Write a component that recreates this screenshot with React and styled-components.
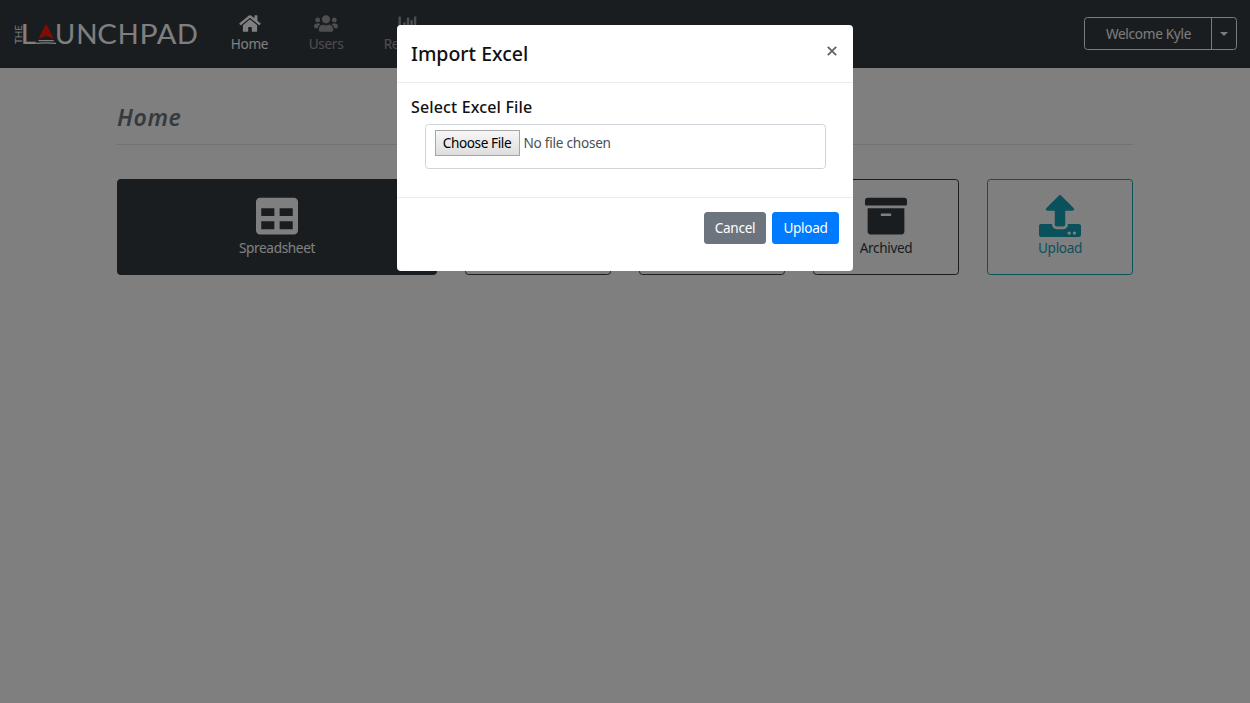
import React from "react";
import styled, { createGlobalStyle } from "styled-components";
import { FaHome, FaUsers, FaChartBar, FaTable, FaArchive, FaUpload } from "react-icons/fa";

const GlobalStyle = createGlobalStyle`
  * { box-sizing: border-box; }
  body {
    margin: 0;
    background: #fff;
    color: #212529;
    font-family: "Noto Sans", "Open Sans", sans-serif;
    font-size: 13.6px;
    line-height: 20px;
    overflow: hidden;
  }
  button { font: inherit; letter-spacing: inherit; }
`;

const Page = styled.div`
  min-height: 703px;
`;

const Navbar = styled.header`
  display: flex;
  align-items: center;
  height: 68px;
  padding: 0 13px 0 14px;
  background: #343a40;
  color: #fff;
`;

const Logo = styled.svg`
  display: block;
  width: 186px;
  height: 30px;
  margin-right: 31px;
  overflow: visible;
  font-family: Lato, sans-serif;
  fill: #fff;
`;

const Nav = styled.nav`
  display: flex;
  gap: 41px;
  margin-right: auto;
`;

const NavItem = styled.a`
  display: flex;
  flex-direction: column;
  align-items: center;
  width: ${(p) => p.$width}px;
  white-space: nowrap;
  letter-spacing: -0.3px;
  color: ${(p) => (p.$active ? "#fff" : "rgba(255, 255, 255, 0.5)")};
  svg { display: block; width: 24px; height: 19px; margin-bottom: 1px; }
`;

const UserMenu = styled.div`
  display: flex;
  height: 33px;
  margin-bottom: 1px;
  border: 1px solid #f8f9fa;
  border-radius: 3.5px;
`;

const UserButton = styled.button`
  width: 126px;
  padding: 1px 0 0 1px;
  border: 0;
  background: none;
  color: #f8f9fa;
  letter-spacing: -0.3px;
`;

const CaretButton = styled.button`
  display: flex;
  align-items: center;
  justify-content: center;
  width: 25px;
  padding: 0;
  border: 0;
  border-left: 1px solid #f8f9fa;
  background: none;
`;

const Caret = styled.span`
  border: 4px solid transparent;
  border-top-color: #f8f9fa;
  border-bottom: 0;
`;

const Content = styled.main`
  width: 1016px;
  margin: 0 auto;
  padding-top: 34px;
`;

const PageTitle = styled.h1`
  height: 43px;
  margin: 0 0 34px;
  border-bottom: 1px solid rgba(0, 0, 0, 0.1);
  color: #6c757d;
  font-size: 23px;
  font-style: italic;
  font-weight: 600;
  line-height: 31px;
  letter-spacing: 0.6px;
`;

const Tiles = styled.div`
  display: grid;
  grid-template-columns: 320px repeat(4, 146px);
  gap: 28px;
`;

const Tile = styled.button`
  display: flex;
  flex-direction: column;
  align-items: center;
  height: 96px;
  padding: 15px 0 0;
  border: 1px solid ${(p) => p.$color};
  border-radius: 3.5px;
  background: ${(p) => (p.$solid ? p.$color : "transparent")};
  color: ${(p) => (p.$solid ? "#fff" : p.$color)};
  letter-spacing: -0.35px;
  svg { display: block; width: 42px; height: 42px; margin-bottom: 1px; }
`;

const Backdrop = styled.div`
  position: fixed;
  inset: 0;
  display: flex;
  align-items: flex-start;
  justify-content: center;
  padding-top: 25px;
  background: rgba(0, 0, 0, 0.5);
`;

const Dialog = styled.section`
  width: 456px;
  height: 246px;
  border-radius: 4px;
  background: #fff;
`;

const DialogHeader = styled.div`
  display: flex;
  justify-content: space-between;
  height: 58px;
  padding: 14px;
  border-bottom: 1px solid #e9ecef;
`;

const DialogTitle = styled.h2`
  margin: 0;
  color: #111;
  font-size: 19.5px;
  font-weight: 500;
  line-height: 30px;
`;

const CloseButton = styled.button`
  width: 14px;
  height: 24px;
  padding: 0;
  border: 0;
  background: none;
  svg { display: block; margin: auto; }
`;

const DialogBody = styled.div`
  height: 115px;
  padding: 13px 14px 0;
  border-bottom: 1px solid #e9ecef;
`;

const FieldLabel = styled.h3`
  margin: 0 0 6px;
  color: #111;
  font-size: 16px;
  font-weight: 500;
  line-height: 22px;
  letter-spacing: 0.15px;
`;

const FileField = styled.div`
  display: flex;
  align-items: flex-start;
  gap: 4px;
  width: 401px;
  height: 45px;
  margin-left: 13.5px;
  padding: 5px 9px;
  border: 1px solid #ced4da;
  border-radius: 3.5px;
  color: #495057;
  line-height: 26px;
  letter-spacing: -0.25px;
`;

const FileButton = styled.button`
  width: 85px;
  height: 26px;
  padding: 0 0 1px;
  border: 1px solid #a6a6a6;
  background: linear-gradient(#f6f6f6, #dedede);
  color: #000;
  line-height: 23px;
  letter-spacing: -0.4px;
  white-space: nowrap;
`;

const DialogFooter = styled.div`
  display: flex;
  justify-content: flex-end;
  gap: 6px;
  padding: 14px;
`;

const ActionButton = styled.button`
  width: ${(p) => p.$width}px;
  height: 32px;
  padding: 0;
  border: 0;
  border-radius: 3.5px;
  background: ${(p) => p.$color};
  color: #fff;
  letter-spacing: -0.3px;
`;

const letters = [
  ["L", 6.6, 1.12], ["U", 41, 1], ["N", 62.2, 1.02], ["C", 83.3, 1.07], ["H", 103.7, 1],
  ["P", 125.4, 1.1], ["A", 142.8, 1.06], ["D", 163.1, 1],
];

function LaunchpadLogo() {
  return (
    <Logo viewBox="0 0 186 30">
      <text transform="translate(8 25) rotate(-90)" fontSize="9.5" textLength="19" lengthAdjust="spacingAndGlyphs">THE</text>
      {letters.map(([char, x, stretch]) => (
        <text key={char + x} transform={`translate(${x} 24.5) scale(${stretch} 1)`} fontSize="27.4">{char}</text>
      ))}
      <path d="M32.2 4.5 39.9 20 32.2 16.8 24.5 20Z" fill="#ff1a08" />
      <path d="M24.5 21.6H39.8M22 24.4Q32 23.4 42 24.4" stroke="#fff" strokeWidth="1.2" fill="none" />
    </Logo>
  );
}

export default function App() {
  return (
    <Page>
      <GlobalStyle />
      <Navbar>
        <LaunchpadLogo />
        <Nav>
          <NavItem $active $width={37}><FaHome />Home</NavItem>
          <NavItem $width={34}><FaUsers />Users</NavItem>
          <NavItem $width={47}><FaChartBar />Reports</NavItem>
        </Nav>
        <UserMenu>
          <UserButton>Welcome Kyle</UserButton>
          <CaretButton><Caret /></CaretButton>
        </UserMenu>
      </Navbar>
      <Content>
        <PageTitle>Home</PageTitle>
        <Tiles>
          <Tile $solid $color="#343a40"><FaTable />Spreadsheet</Tile>
          <Tile $color="#343a40" />
          <Tile $color="#343a40" />
          <Tile $color="#343a40"><FaArchive />Archived</Tile>
          <Tile $color="#17a2b8"><FaUpload />Upload</Tile>
        </Tiles>
      </Content>
      <Backdrop>
        <Dialog>
          <DialogHeader>
            <DialogTitle>Import Excel</DialogTitle>
            <CloseButton>
              <svg width="10" height="10" viewBox="0 0 10 10" stroke="#666" strokeWidth="1.9">
                <path d="M.8.8 9.2 9.2M9.2.8.8 9.2" />
              </svg>
            </CloseButton>
          </DialogHeader>
          <DialogBody>
            <FieldLabel>Select Excel File</FieldLabel>
            <FileField>
              <FileButton>Choose File</FileButton>
              No file chosen
            </FileField>
          </DialogBody>
          <DialogFooter>
            <ActionButton $color="#6c757d" $width={62}>Cancel</ActionButton>
            <ActionButton $color="#007bff" $width={67}>Upload</ActionButton>
          </DialogFooter>
        </Dialog>
      </Backdrop>
    </Page>
  );
}
